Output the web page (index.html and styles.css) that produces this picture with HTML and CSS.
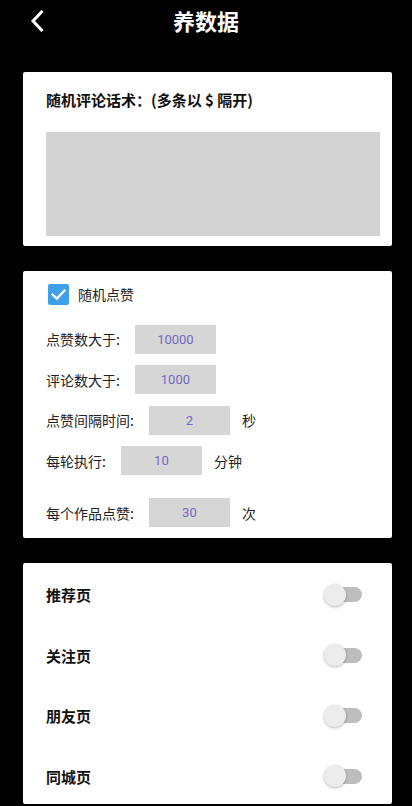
FILE: index.html
```html
<!DOCTYPE html>
<html lang="zh-CN">
<head>
<meta charset="utf-8">
<meta name="viewport" content="width=device-width, initial-scale=1">
<title>养数据</title>
<link rel="stylesheet" href="styles.css">
</head>
<body>
<header class="topbar">
  <div class="back">
    <svg class="back-icon" viewBox="0 0 14 22" width="14" height="22" aria-hidden="true">
      <path d="M11.5 2 L3 11 L11.5 20" fill="none" stroke="#fff" stroke-width="3" stroke-linecap="square" stroke-linejoin="miter"/>
    </svg>
  </div>
  <h1 class="title">养数据</h1>
  <div class="spacer"></div>
</header>

<main class="content">
  <section class="card card-comment">
    <div class="comment-title">随机评论话术：(多条以 $ 隔开)</div>
    <div class="comment-area"></div>
  </section>

  <section class="card card-like">
    <div class="check-row">
      <span class="checkbox">
        <svg viewBox="0 0 21 21" width="21" height="21" aria-hidden="true">
          <path d="M4.5 10.5 L8.8 14.6 L16.5 6.5" fill="none" stroke="#fff" stroke-width="2.2" stroke-linecap="square"/>
        </svg>
      </span>
      <span class="check-label">随机点赞</span>
    </div>
    <div class="fields">
      <div class="field"><span class="f-label">点赞数大于:</span><span class="f-box">10000</span></div>
      <div class="field"><span class="f-label">评论数大于:</span><span class="f-box">1000</span></div>
      <div class="field"><span class="f-label">点赞间隔时间:</span><span class="f-box">2</span><span class="f-unit">秒</span></div>
      <div class="field"><span class="f-label">每轮执行:</span><span class="f-box">10</span><span class="f-unit">分钟</span></div>
      <div class="field field-last"><span class="f-label">每个作品点赞:</span><span class="f-box">30</span><span class="f-unit">次</span></div>
    </div>
  </section>

  <section class="card card-pages">
    <div class="page-row"><span class="page-label">推荐页</span><span class="switch"><span class="track"></span><span class="thumb"></span></span></div>
    <div class="page-row"><span class="page-label">关注页</span><span class="switch"><span class="track"></span><span class="thumb"></span></span></div>
    <div class="page-row"><span class="page-label">朋友页</span><span class="switch"><span class="track"></span><span class="thumb"></span></span></div>
    <div class="page-row"><span class="page-label">同城页</span><span class="switch"><span class="track"></span><span class="thumb"></span></span></div>
  </section>
</main>
</body>
</html>
```

FILE: styles.css
```css
html {
  background: #000;
}
body {
  margin: 0;
  background: #000;
  font-family: "Noto Sans CJK SC", "Noto Sans", Roboto, sans-serif;
  color: #111;
}

.topbar {
  height: 41px;
  display: grid;
  grid-template-columns: 1fr auto 1fr;
  align-items: center;
}
.back {
  display: flex;
  align-items: center;
  padding-left: 30px;
}
.back-icon {
  display: block;
}
.title {
  margin: 0;
  font-size: 22px;
  font-weight: 700;
  color: #fff;
  line-height: 41px;
}

.content {
  padding-top: 31px;
  margin: 0 20px 0 23px;
  display: flex;
  flex-direction: column;
  gap: 24.5px;
}

.card {
  background: #fff;
  border-radius: 2px;
}

/* card 1 */
.card-comment {
  padding: 18px 12px 10px 23px;
}
.comment-title {
  font-size: 15px;
  font-weight: 700;
  line-height: 20px;
  color: #111;
}
.comment-area {
  margin-top: 22px;
  height: 104px;
  background: #d3d3d3;
}

/* card 2 */
.card-like {
  padding: 13px 12px 11px 23px;
}
.check-row {
  display: flex;
  align-items: center;
  height: 21px;
  padding-left: 2px;
}
.checkbox {
  width: 21px;
  height: 21px;
  border-radius: 2px;
  background: #3fa0ea;
  display: block;
}
.checkbox svg {
  display: block;
}
.check-label {
  margin-left: 9px;
  font-size: 14px;
  color: #222;
}
.fields {
  margin-top: 20px;
  display: flex;
  flex-direction: column;
  gap: 11.5px;
}
.field {
  display: flex;
  align-items: center;
  height: 29px;
}
.field-last {
  margin-top: 11.5px;
}
.f-label {
  font-size: 14px;
  color: #222;
}
.f-box {
  margin-left: 15px;
  width: 81px;
  height: 29px;
  background: #d6d6d6;
  color: #7468c2;
  font-family: Roboto, "Noto Sans", sans-serif;
  font-size: 13px;
  display: flex;
  align-items: center;
  justify-content: center;
}
.f-unit {
  margin-left: 12px;
  font-size: 14px;
  color: #222;
}

/* card 3 */
.card-pages {
  padding: 6px 30px 2px 23px;
  display: flex;
  flex-direction: column;
  gap: 8.67px;
}
.page-row {
  height: 52px;
  display: flex;
  align-items: center;
  justify-content: space-between;
}
.page-label {
  font-size: 15px;
  font-weight: 700;
  color: #111;
}
.switch {
  position: relative;
  width: 38px;
  height: 22px;
  display: block;
}
.track {
  position: absolute;
  right: 0;
  top: 3.5px;
  width: 33px;
  height: 15px;
  border-radius: 8px;
  background: #bdbdbd;
}
.thumb {
  position: absolute;
  left: 0;
  top: 0;
  width: 22px;
  height: 22px;
  border-radius: 50%;
  background: #ececec;
  box-shadow: 0 1px 3px rgba(0, 0, 0, 0.28);
}
```
